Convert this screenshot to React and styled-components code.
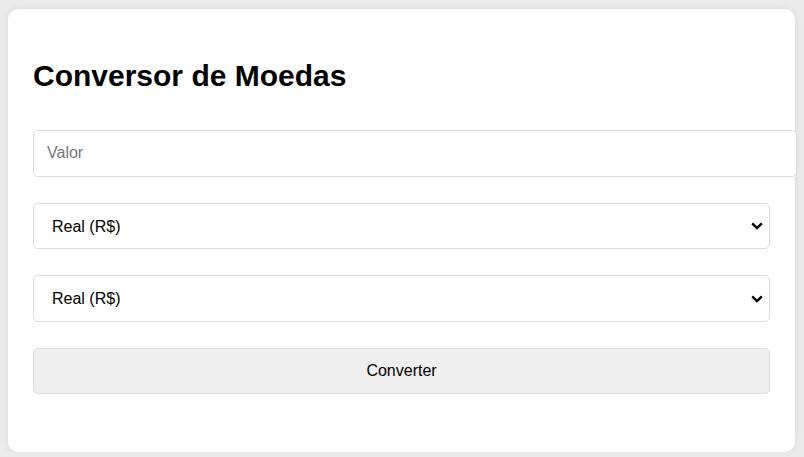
import React from 'react';
import styled, { createGlobalStyle } from 'styled-components';

const Global = createGlobalStyle`
    body {
        margin: 0;
        background: #ebebeb;
        font-family: "Liberation Sans", Arial, sans-serif;
    }
`;

const chevron =
    "data:image/svg+xml;utf8," +
    encodeURIComponent(
        '<svg xmlns="http://www.w3.org/2000/svg" width="12" height="8" viewBox="0 0 12 8"><path d="M1.2 1.4 L6 6 L10.8 1.4" fill="none" stroke="#000" stroke-width="2.4"/></svg>'
    );

const Card = styled.div`
    margin: 9px 9px 0 8px;
    height: 443px;
    box-sizing: border-box;
    background: #fff;
    border-radius: 10px;
    box-shadow: 0 0 8px rgba(0, 0, 0, 0.08);
    padding: 25px;
`;

const Title = styled.h1`
    margin: 25px 0 37px;
    font-size: 30px;
    line-height: 34px;
    font-weight: bold;
    color: #000;
`;

const Form = styled.div`
    display: flex;
    flex-direction: column;
    align-items: flex-start;
    gap: 26px;
`;

const field = `
    height: 46.7px;
    border: 1px solid #dcdcdc;
    border-radius: 5px;
    font-family: "Liberation Sans", Arial, sans-serif;
    font-size: 16px;
    color: #000;
    outline: none;
`;

const Input = styled.input`
    ${field}
    box-sizing: border-box;
    width: calc(100% + 27px);
    padding: 0 13px;
    background: #fff;

    &::placeholder {
        color: #777;
    }
`;

const Select = styled.select`
    ${field}
    box-sizing: border-box;
    width: 100%;
    padding: 0 24px 0 18px;
    appearance: none;
    -webkit-appearance: none;
    background: #fff url("${chevron}") no-repeat right 6px center;
`;

const Button = styled.button`
    ${field}
    box-sizing: border-box;
    width: 100%;
    height: 46.3px;
    background: #efefef;
    cursor: pointer;
`;

const App = () => {
    return (
        <>
            <Global />
            <Card>
                <Title>Conversor de Moedas</Title>
                <Form>
                    <Input type="text" placeholder="Valor" />
                    <Select defaultValue="BRL">
                        <option value="BRL">Real (R$)</option>
                        <option value="USD">Dólar (US$)</option>
                        <option value="EUR">Euro (€)</option>
                    </Select>
                    <Select defaultValue="BRL">
                        <option value="BRL">Real (R$)</option>
                        <option value="USD">Dólar (US$)</option>
                        <option value="EUR">Euro (€)</option>
                    </Select>
                    <Button>Converter</Button>
                </Form>
            </Card>
        </>
    );
};

export default App;
